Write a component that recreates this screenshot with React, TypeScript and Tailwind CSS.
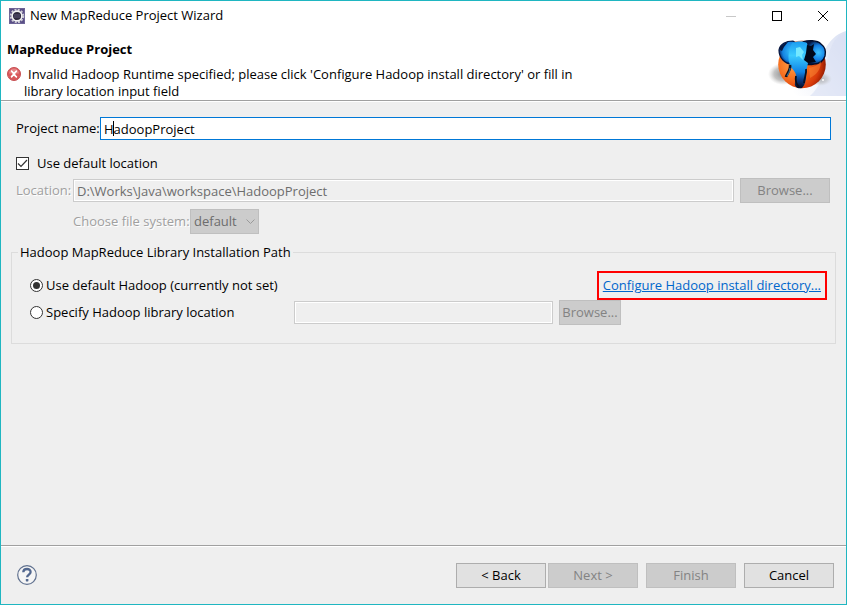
import { useState } from "react"
import clsx from "clsx"

function EclipseIcon() {
  return (
    <svg viewBox="0 0 16 16" className="size-4 shrink-0" aria-hidden="true">
      <rect width="16" height="16" fill="#5a4f86" />
      <rect x="0.5" y="0.5" width="15" height="15" fill="none" stroke="#6d6496" />
      <circle cx="8" cy="8" r="6.3" fill="none" stroke="#cfced6" strokeWidth="1.8" strokeDasharray="2 1.3" />
      <circle cx="8" cy="8" r="4.9" fill="#2f2b3f" stroke="#f4f4f4" strokeWidth="1.6" />
      <path d="M5 7h6M4.7 9h6.6" stroke="#5d5778" />
    </svg>
  )
}

function ErrorIcon() {
  return (
    <svg viewBox="0 0 14 14" className="mt-px size-3.5 shrink-0" aria-hidden="true">
      <circle cx="7" cy="7" r="6.5" fill="#d9585b" stroke="#c64f52" />
      <path d="M2 6.5a5 5 0 0 1 10 0z" fill="#e58385" />
      <path d="M4 3.8c2 .2 3.8 5.8 6 6.4M9.9 3.8C8.2 4.2 6 9.4 4 10.2" fill="none" stroke="#fff" strokeWidth="1.8" />
    </svg>
  )
}

function HadoopBanner() {
  return (
    <svg viewBox="0 0 80 65" className="mt-px h-[65px] w-20" aria-hidden="true">
      <defs>
        <linearGradient id="sky" x1="1" y1="0.2" x2="0.1" y2="0.8">
          <stop offset="0" stopColor="#dde3f4" />
          <stop offset="1" stopColor="#fff" />
        </linearGradient>
        <radialGradient id="ball" cx="0.3" cy="0.5" r="0.75">
          <stop offset="0" stopColor="#ffa04a" />
          <stop offset="0.4" stopColor="#f66f1e" />
          <stop offset="0.75" stopColor="#d93a0a" />
          <stop offset="1" stopColor="#7c1200" />
        </radialGradient>
        <radialGradient id="shade">
          <stop offset="0" stopColor="#8c8c8c" />
          <stop offset="0.6" stopColor="#b4b4b4" stopOpacity="0.8" />
          <stop offset="1" stopColor="#ccc" stopOpacity="0" />
        </radialGradient>
        <radialGradient id="leftEar" cx="0.6" cy="0.45" r="0.6">
          <stop offset="0" stopColor="#35c0fb" />
          <stop offset="0.7" stopColor="#1583e2" />
          <stop offset="1" stopColor="#06276c" />
        </radialGradient>
        <radialGradient id="rightEar" cx="0.7" cy="0.5" r="0.55">
          <stop offset="0" stopColor="#3cc4ff" />
          <stop offset="0.55" stopColor="#1480e4" />
          <stop offset="1" stopColor="#041540" />
        </radialGradient>
        <linearGradient id="trunk" x1="0" y1="0" x2="0" y2="1">
          <stop offset="0" stopColor="#1a9cf0" />
          <stop offset="0.3" stopColor="#3ccbff" />
          <stop offset="0.65" stopColor="#0f84e6" />
          <stop offset="0.82" stopColor="#0a3c86" />
          <stop offset="1" stopColor="#020a22" />
        </linearGradient>
      </defs>
      <path d="M80 0C48 10 62 50 14 65h66z" fill="url(#sky)" />
      <path d="M80 2C56 8 66 46 44 65h36z" fill="#d8e0f4" opacity="0.6" />
      <ellipse cx="17" cy="43" rx="15" ry="11" fill="url(#shade)" />
      <ellipse cx="54" cy="48" rx="12" ry="7" fill="url(#shade)" opacity="0.6" />
      <circle cx="36" cy="33.5" r="23.8" fill="url(#ball)" />
      <path d="M18 17c6-9 28-10 37 0z" fill="#d99a78" />
      <path
        d="M13 19c1-6 7-9 14-9l6 4v17l-7 2c-7 0-13-6-13-14z"
        fill="url(#leftEar)"
        stroke="#04133c"
        strokeWidth="1.2"
      />
      <path
        d="M37 11c5-2 14-2 18 2 4 3 5 8 4 12-2 6-6 8-11 8-4 1-9 1-12-3z"
        fill="url(#rightEar)"
        stroke="#030d2b"
        strokeWidth="1.4"
      />
      <path
        d="M26 12c5-2 11-2 15 0l2 10-1 10c-1 5-2 8-2 13 0 4-1 9-4 12-4 1-8-1-7-5l1-7c0-5-4-6-6-11-3-7-1-16 2-22z"
        fill="url(#trunk)"
      />
      <path d="M30 17l4-1 4 5-2 3 1 5-4-4-3 1z" fill="#74e8ff" />
      <path d="M41 14l4 1 3-2-1 6 3 4-3 3 3 5-8 1-4-3 2-7z" fill="#010819" />
      <path d="M14 16l5-4 3-1-4 5-2 4-2-1z" fill="#051740" />
      <path d="M24 34c1 5-3 8-4 12" fill="none" stroke="#0d0f1c" strokeWidth="2.6" />
      <path d="M24 37c0 4-2 5-3 8" fill="none" stroke="#3d9ccc" strokeWidth="0.8" />
      <path d="M40 38c1 5-2 9-2 14" fill="none" stroke="#071024" strokeWidth="1.8" />
      <path d="M30 45c-1 5 0 8 3 11" fill="none" stroke="#0b0d1b" strokeWidth="1.8" />
      <path d="M43 37c5-1 9-3 12-7 0 9-5 14-11 17z" fill="#fb8a38" opacity="0.5" />
      <circle cx="57" cy="49" r="1" fill="#fff" />
    </svg>
  )
}

function HelpIcon() {
  return (
    <svg viewBox="0 0 20 20" className="size-5" aria-hidden="true">
      <circle cx="10" cy="10" r="9.3" fill="#f5f5f5" stroke="#60718f" strokeWidth="1.2" />
      <path
        d="M6.3 7.2C6.4 2.9 13.7 3 13.6 7c0 2.4-3.5 2.7-3.5 5.3"
        fill="none"
        stroke="#53688f"
        strokeWidth="2.3"
      />
      <rect x="8.8" y="14" width="2.6" height="2.4" rx="0.6" fill="#53688f" />
    </svg>
  )
}

type ButtonProps = {
  children: React.ReactNode
  disabled?: boolean
  className?: string
}

function Button({ children, disabled, className = "w-[90px]" }: ButtonProps) {
  return (
    <button
      type="button"
      disabled={disabled}
      className={clsx(
        "h-[25px] shrink-0 border text-center",
        disabled ? "border-[#bfbfbf] bg-[#cccccc] text-[#838383]" : "border-[#adadad] bg-[#e1e1e1] text-black",
        className
      )}
    >
      {children}
    </button>
  )
}

const disabledField = "h-[23px] border border-[#cccccc] bg-[#efefef] px-[3px] text-[#6d6d6d] shadow-[inset_0_0_0_1px_#fff]"
const disabledLabel = "whitespace-nowrap text-[#a0a0a0] [text-shadow:1px_1px_0_#fff]"
const radio =
  "grid size-[13px] appearance-none place-content-center rounded-full border border-[#333] bg-white before:size-[7px] before:rounded-full checked:before:bg-[#333]"

export default function App() {
  const [name, setName] = useState("HadoopProject")
  const [useDefault, setUseDefault] = useState(true)
  const [library, setLibrary] = useState("default")

  return (
    <div className="flex min-h-screen flex-col border border-[#1fb6c1] bg-[#efefef] font-['Open_Sans','Noto_Sans',sans-serif] text-[13px] leading-[17px] text-black">
      <div className="flex h-[29px] items-center bg-white pl-2">
        <EclipseIcon />
        <span className="ml-[5px] flex-1">New MapReduce Project Wizard</span>
        <button type="button" aria-label="Minimize" disabled className="grid h-full w-[46px] place-items-center text-[#c8c8c8]">
          <svg viewBox="0 0 10 10" className="size-2.5" stroke="currentColor">
            <path d="M0 5.5h10" />
          </svg>
        </button>
        <button type="button" aria-label="Maximize" className="grid h-full w-[46px] place-items-center">
          <svg viewBox="0 0 10 10" className="size-2.5" fill="none" stroke="currentColor">
            <rect x="0.5" y="0.5" width="9" height="9" />
          </svg>
        </button>
        <button type="button" aria-label="Close" className="grid h-full w-[46px] place-items-center">
          <svg viewBox="0 0 10 10" className="size-2.5" stroke="currentColor">
            <path d="M0 0l10 10M10 0L0 10" />
          </svg>
        </button>
      </div>

      <header className="flex h-[71px] justify-between border-b border-[#a0a0a0] bg-white">
        <div className="pl-1.5 pt-[11px]">
          <h1 className="font-bold">MapReduce Project</h1>
          <div className="mt-2 flex gap-[3px]">
            <ErrorIcon />
            <p className="indent-1">
              Invalid Hadoop Runtime specified; please click 'Configure Hadoop install directory' or fill in{" "}
              <span className="block indent-0">library location input field</span>
            </p>
          </div>
        </div>
        <HadoopBanner />
      </header>

      <main className="flex-1 border-t border-white px-2.5 pt-[15px]">
        <div className="flex items-center px-[5px]">
          <label htmlFor="name" className="w-[84px] whitespace-nowrap">
            Project name:
          </label>
          <div className="relative flex-1">
            <input
              id="name"
              value={name}
              onChange={(e) => setName(e.target.value)}
              className="block h-[23px] w-full border border-[#0078d7] bg-white px-[3px] outline-none"
            />
            <span className="absolute left-[13px] top-1 h-[15px] w-px bg-black" />
          </div>
        </div>

        <div className="mt-[15px] flex items-center gap-2 pl-[5px]">
          <span className="grid">
            <input
              id="default-location"
              type="checkbox"
              checked={useDefault}
              onChange={(e) => setUseDefault(e.target.checked)}
              className="col-start-1 row-start-1 size-[13px] appearance-none border border-[#333] bg-white"
            />
            {useDefault && (
              <svg viewBox="0 0 13 13" className="pointer-events-none col-start-1 row-start-1 size-[13px]" fill="none" stroke="#333" strokeWidth="1.2">
                <path d="M2 6.5l3 3 6-6.5" />
              </svg>
            )}
          </span>
          <label htmlFor="default-location">Use default location</label>
        </div>

        <div className="mt-1.5 flex items-center pl-[5px] pr-1.5">
          <label htmlFor="location" className={clsx("w-[57px]", disabledLabel)}>
            Location:
          </label>
          <input id="location" disabled value="D:\Works\Java\workspace\HadoopProject" className={clsx("mr-1.5 min-w-0 flex-1", disabledField)} />
          <Button disabled>Browse...</Button>
        </div>

        <div className="mt-1.5 flex items-center pl-[62px]">
          <label htmlFor="fs" className={clsx("w-[117px]", disabledLabel)}>
            Choose file system:
          </label>
          <div className="grid items-center">
            <select
              id="fs"
              disabled
              className="col-start-1 row-start-1 h-[25px] w-[69px] appearance-none border border-[#bfbfbf] bg-[#cccccc] px-[3px] text-[#6d6d6d] opacity-100"
            >
              <option>default</option>
            </select>
            <svg viewBox="0 0 9 5" className="pointer-events-none col-start-1 row-start-1 mr-1 h-[5px] w-[9px] justify-self-end" fill="none" stroke="#9a9a9a">
              <path d="M0.5 0.5l4 4 4-4" />
            </svg>
          </div>
        </div>

        <fieldset className="mt-2.5 border border-[#dcdcdc] pb-[18px] pl-[18px] pr-2">
          <legend className="-ml-3 px-0.5">Hadoop MapReduce Library Installation Path</legend>
          <div className="flex items-center justify-between pt-2.5">
            <label className="flex items-center gap-[3px]">
              <input
                type="radio"
                name="library"
                checked={library === "default"}
                onChange={() => setLibrary("default")}
                className={radio}
              />
              Use default Hadoop (currently not set)
            </label>
            <a href="#" className="border-2 border-[#ff0000] px-1 py-1 text-[#0066cc] underline">
              Configure Hadoop install directory...
            </a>
          </div>
          <div className="flex items-center">
            <label className="flex w-[264px] items-center gap-[3px]">
              <input
                type="radio"
                name="library"
                checked={library === "custom"}
                onChange={() => setLibrary("custom")}
                className={radio}
              />
              Specify Hadoop library location
            </label>
            <input disabled aria-label="Hadoop library location" className={clsx("mr-1.5 w-[259px]", disabledField)} />
            <Button disabled className="w-[62px]">
              Browse...
            </Button>
          </div>
        </fieldset>
      </main>

      <footer className="flex h-[59px] items-center border-t border-[#a0a0a0] pl-4 pr-3 shadow-[inset_0_1px_0_#fff]">
        <button type="button" aria-label="Help" className="mr-auto">
          <HelpIcon />
        </button>
        <div className="flex gap-2">
          <div className="flex gap-0.5">
            <Button>&lt; Back</Button>
            <Button disabled>Next &gt;</Button>
          </div>
          <Button disabled>Finish</Button>
          <Button>Cancel</Button>
        </div>
      </footer>
    </div>
  )
}
